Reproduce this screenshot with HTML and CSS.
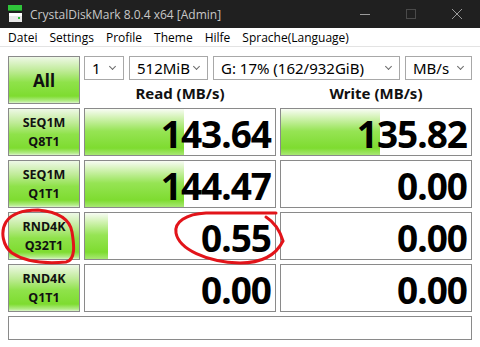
FILE: index.html
```html
<!DOCTYPE html>
<html lang="de">
<head>
  <meta charset="UTF-8">
  <title>CrystalDiskMark 8.0.4 x64 [Admin]</title>
  <link rel="stylesheet" href="styles.css">
</head>
<body>
  <div class="titlebar">
    <svg class="app-icon" width="16" height="18" viewBox="0 0 16 18">
      <rect x="1" y="0" width="14" height="5" fill="#2fc43a"/>
      <rect x="1" y="5" width="14" height="1" fill="#1f8a28"/>
      <rect x="2" y="8" width="13" height="9" fill="#e8e8e8"/>
      <rect x="2" y="8" width="13" height="3" fill="#ffffff"/>
      <rect x="11" y="12" width="2" height="2" fill="#2fc43a"/>
    </svg>
    <span class="title-text">CrystalDiskMark 8.0.4 x64 [Admin]</span>
    <div class="win-controls">
      <span class="win-btn"><svg width="12" height="12" viewBox="0 0 12 12"><path d="M1 6.5h10" stroke="#9a9a9a" stroke-width="1"/></svg></span>
      <span class="win-btn"><svg width="12" height="12" viewBox="0 0 12 12"><rect x="1.5" y="1.5" width="9" height="9" fill="none" stroke="#4a4a4a" stroke-width="1"/></svg></span>
      <span class="win-btn"><svg width="12" height="12" viewBox="0 0 12 12"><path d="M1 1l10 10M11 1L1 11" stroke="#9a9a9a" stroke-width="1"/></svg></span>
    </div>
  </div>

  <div class="menubar">
    <span>Datei</span>
    <span>Settings</span>
    <span>Profile</span>
    <span>Theme</span>
    <span>Hilfe</span>
    <span>Sprache(Language)</span>
  </div>

  <div class="main">
    <button class="test-btn all-btn">All</button>
    <div class="top-panel">
      <div class="selects">
        <div class="select s-count">1<i class="chev"></i></div>
        <div class="select s-size">512MiB<i class="chev"></i></div>
        <div class="select s-drive">G: 17% (162/932GiB)<i class="chev"></i></div>
        <div class="select s-unit">MB/s<i class="chev"></i></div>
      </div>
      <div class="headers">
        <div>Read (MB/s)</div>
        <div>Write (MB/s)</div>
      </div>
    </div>

    <button class="test-btn">SEQ1M<br>Q8T1</button>
    <div class="cell"><div class="bar" style="width: 52%"></div><span class="val">143.64</span></div>
    <div class="cell"><div class="bar" style="width: 52%"></div><span class="val">135.82</span></div>

    <button class="test-btn">SEQ1M<br>Q1T1</button>
    <div class="cell"><div class="bar" style="width: 52%"></div><span class="val">144.47</span></div>
    <div class="cell"><span class="val">0.00</span></div>

    <button class="test-btn">RND4K<br>Q32T1</button>
    <div class="cell"><div class="bar" style="width: 12%"></div><span class="val">0.55</span></div>
    <div class="cell"><span class="val">0.00</span></div>

    <button class="test-btn">RND4K<br>Q1T1</button>
    <div class="cell"><span class="val">0.00</span></div>
    <div class="cell"><span class="val">0.00</span></div>

    <div class="status"></div>
  </div>

  <svg class="marks" width="480" height="347" viewBox="0 0 480 347">
    <path d="M38 210 C24 210 12 213 6 222 C0 232 3 246 12 253 C24 261 44 264 66 262 C76 260 74 244 72 232 C70 220 60 212 38 210 Z" fill="none" stroke="#e2141a" stroke-width="3" stroke-linecap="round"/>
    <path d="M276 213 L206 213 C186 214 174 222 176 233 C179 249 206 262 240 263 C262 263 276 255 283 241 C280 231 274 222 266 217" fill="none" stroke="#e2141a" stroke-width="3" stroke-linecap="round"/>
  </svg>
</body>
</html>
```

FILE: styles.css
```css
body {
  margin: 0;
  width: 480px;
  height: 347px;
  background: #fff;
  font-family: 'Noto Sans', 'Open Sans', sans-serif;
  position: relative;
  overflow: hidden;
}
.titlebar {
  height: 28px;
  background: #202020;
  display: flex;
  align-items: center;
}
.app-icon {
  margin-left: 7px;
  margin-right: 7px;
}
.title-text {
  color: #c8c8c8;
  font-size: 12px;
  font-family: 'Open Sans', 'Noto Sans', sans-serif;
}
.win-controls {
  margin-left: auto;
  display: flex;
}
.win-btn {
  width: 46px;
  height: 28px;
  display: flex;
  align-items: center;
  justify-content: center;
}
.menubar {
  height: 18px;
  display: flex;
  align-items: center;
  border-bottom: 1px solid #e3e3e3;
  font-size: 12px;
  font-family: 'Open Sans', 'Noto Sans', sans-serif;
  color: #000;
  padding-left: 2px;
}
.menubar span {
  padding: 0 6px;
}
.main {
  display: grid;
  grid-template-columns: 72px 192px 192px;
  grid-template-rows: 48px 48px 48px 48px 48px 24px;
  gap: 4px;
  padding: 9px 8px 0 8px;
}
.test-btn {
  margin: 0;
  padding: 0;
  border: 1px solid #8a8a8a;
  background: linear-gradient(#eef8e6 0%, #bfeb97 30%, #8fe24a 55%, #7edc30 85%, #b4ec8a 96%, #dcf5cc 100%);
  font-family: 'Noto Sans', sans-serif;
  font-weight: bold;
  font-size: 12.5px;
  line-height: 19px;
  color: #111;
}
.all-btn {
  font-size: 17px;
}
.top-panel {
  grid-column: 2 / 4;
  display: flex;
  flex-direction: column;
}
.selects {
  display: flex;
  gap: 5px;
  height: 24px;
}
.select {
  box-sizing: border-box;
  border: 1px solid #a8a8a8;
  height: 24px;
  font-size: 15px;
  line-height: 22px;
  padding-left: 7px;
  color: #000;
  position: relative;
}
.s-count { width: 40px; }
.s-size { width: 79px; }
.s-drive { width: 187px; }
.s-unit { width: 67px; }
.chev {
  position: absolute;
  right: 8px;
  top: 7px;
  width: 4px;
  height: 4px;
  border-right: 1px solid #6a6a6a;
  border-bottom: 1px solid #6a6a6a;
  transform: rotate(45deg);
}
.headers {
  display: grid;
  grid-template-columns: 192px 192px;
  gap: 4px;
  flex: 1;
  align-items: center;
  text-align: center;
  font-weight: bold;
  font-size: 15px;
  color: #111;
  padding-top: 1px;
}
.cell {
  box-sizing: border-box;
  border: 1px solid #8a8a8a;
  position: relative;
  display: flex;
  align-items: center;
  justify-content: flex-end;
  padding-right: 4px;
}
.bar {
  position: absolute;
  left: 0;
  top: 0;
  bottom: 0;
  background: linear-gradient(#f8fcf4 0%, #d0f2b0 20%, #96e454 48%, #7edc30 85%, #a8e874 100%);
}
.val {
  position: relative;
  font-weight: bold;
  font-size: 37px;
  letter-spacing: -1px;
  line-height: 1;
  color: #000;
  margin-top: 2px;
}
.status {
  grid-column: 1 / 4;
  border: 1px solid #8a8a8a;
}
.marks {
  position: absolute;
  left: 0;
  top: 0;
  pointer-events: none;
}
```
